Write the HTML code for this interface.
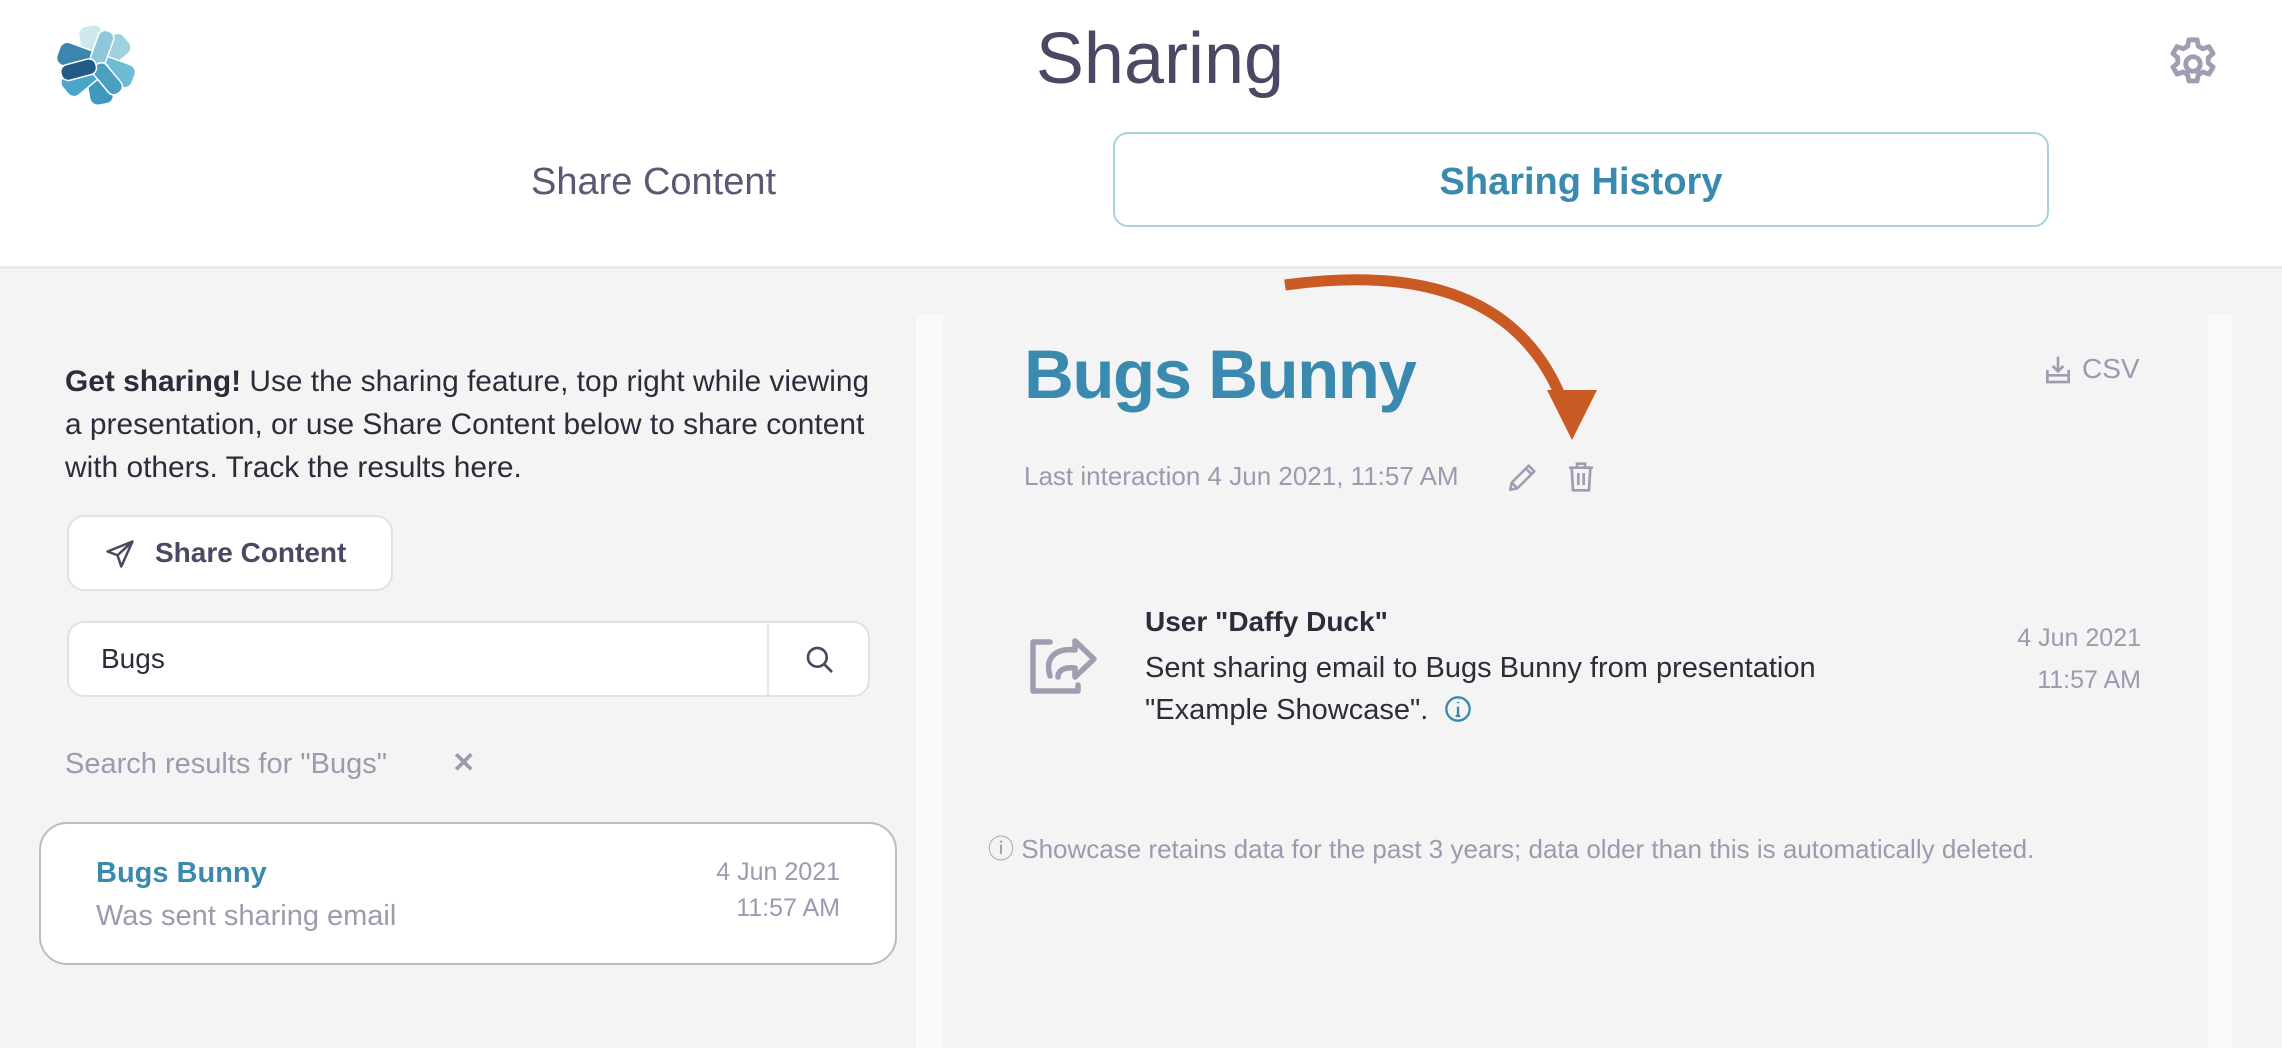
<!DOCTYPE html>
<html><head><meta charset="utf-8"><style>
*{margin:0;padding:0;box-sizing:border-box}
body{width:2282px;height:1048px;overflow:hidden;background:#f4f4f4;font-family:"Liberation Sans",sans-serif;position:relative}
.abs{position:absolute;white-space:nowrap}
#hdr{position:absolute;left:0;top:0;width:2282px;height:269px;background:#fff;border-bottom:3px solid #e8e8ef}
.g{color:#9c9aae}
</style></head><body>
<div id="hdr"></div>
<svg class="abs" style="left:53px;top:25px" width="86" height="80" viewBox="-43 -40 86 80">
<g stroke="#fff" stroke-width="1.5" stroke-linejoin="round">
<rect x="-12" y="-40" width="24" height="42" rx="8" fill="#cfe8ee" transform="rotate(-10)"/>
<rect x="-12" y="-40" width="24" height="42" rx="8" fill="#9fd2df" transform="rotate(50)"/>
<rect x="-12" y="-40" width="24" height="42" rx="8" fill="#6dbcd4" transform="rotate(110)"/>
<rect x="-12" y="-40" width="24" height="42" rx="8" fill="#3f98bd" transform="rotate(170)"/>
<rect x="-12" y="-40" width="24" height="42" rx="8" fill="#4aa6c8" transform="rotate(230)"/>
<rect x="-12" y="-40" width="24" height="42" rx="8" fill="#3a86ad" transform="rotate(290)"/>
<rect x="-8" y="-36" width="16" height="36" rx="7" fill="#8cc8d8" transform="rotate(20)"/>
<rect x="-8" y="-36" width="16" height="36" rx="7" fill="#4d9fc0" transform="rotate(140)"/>
<rect x="-8" y="-36" width="16" height="36" rx="7" fill="#245a86" transform="rotate(255)"/>
</g></svg>
<div class="abs" style="left:0;width:2320px;top:18px;text-align:center;font-size:72px;color:#4a4862">Sharing</div>
<svg class="abs" style="left:2164px;top:35px" width="58" height="58" viewBox="0 0 24 24" fill="none" stroke="#9e9db1" stroke-width="2" stroke-linejoin="round"><path d="M10.3 2h3.4l.5 2.6 1.9 1.1 2.5-.9 1.7 2.9-2 1.7v2.2l2 1.7-1.7 2.9-2.5-.9-1.9 1.1-.5 2.6h-3.4l-.5-2.6-1.9-1.1-2.5.9-1.7-2.9 2-1.7v-2.2l-2-1.7 1.7-2.9 2.5.9 1.9-1.1z"/><circle cx="12" cy="12" r="3"/></svg>
<div class="abs" style="left:531px;top:161px;font-size:38px;color:#5a5873">Share Content</div>
<div class="abs" style="left:1113px;top:132px;width:936px;height:95px;border:2px solid #a9d2dc;border-radius:15px;text-align:center;line-height:97px;font-size:38px;font-weight:bold;color:#3a8aaf">Sharing History</div>
<div class="abs" style="left:65px;top:360px;font-size:29.9px;line-height:43px;color:#2c2c3a;white-space:normal;width:818px"><b>Get sharing!</b> Use the sharing feature, top right while viewing a presentation, or use Share Content below to share content with others. Track the results here.</div>
<div class="abs" style="left:67px;top:515px;width:326px;height:76px;background:#fff;border:2px solid #e0e0ea;border-radius:17px;font-size:28px;font-weight:bold;color:#4a4862;line-height:72px;padding-left:86px">
<svg style="position:absolute;left:36px;top:22px" width="30" height="30" viewBox="0 0 24 24" fill="none" stroke="#4a4862" stroke-width="2" stroke-linejoin="round"><path d="M22 2L2 10l8 3 3 9z M22 2L10 13"/></svg>Share Content</div>
<div class="abs" style="left:67px;top:621px;width:803px;height:76px;background:#fff;border:2px solid #e0e0ea;border-radius:17px;font-size:28px;color:#2c2c3a;line-height:72px;padding-left:32px">Bugs
<div style="position:absolute;left:698px;top:0;width:2px;height:72px;background:#e4e4ec"></div>
<svg style="position:absolute;left:735px;top:21px" width="32" height="32" viewBox="0 0 24 24" fill="none" stroke="#4a4862" stroke-width="2"><circle cx="10" cy="10" r="7"/><path d="M15 15l6 6"/></svg></div>
<div class="abs g" style="left:65px;top:748px;font-size:29px">Search results for "Bugs"</div>
<div class="abs g" style="left:452px;top:746px;font-size:28px;font-weight:bold">✕</div>
<div class="abs" style="left:39px;top:822px;width:858px;height:143px;background:#fff;border:2px solid #bdbcc4;border-radius:28px"></div>
<div class="abs" style="left:96px;top:857px;font-size:29px;font-weight:bold;color:#3a8aaf">Bugs Bunny</div>
<div class="abs g" style="left:96px;top:900px;font-size:29px">Was sent sharing email</div>
<div class="abs g" style="right:1442px;top:854px;font-size:25px;text-align:right;line-height:36px">4 Jun 2021<br>11:57 AM</div>
<div class="abs" style="left:914px;top:314px;width:29px;height:734px;background:#f9f9f9;border-left:1px solid #eee"></div>
<div class="abs" style="left:2208px;top:314px;width:26px;height:734px;background:#f9f9f9;border-right:1px solid #eee"></div>
<div class="abs" style="left:1024px;top:335px;font-size:69px;letter-spacing:-1.5px;font-weight:bold;color:#3a8aaf">Bugs Bunny</div>
<svg class="abs" style="left:2042px;top:353px" width="32" height="34" viewBox="0 0 24 24" fill="none" stroke="#9e9db1" stroke-width="2"><path d="M12 2v11M8 9l4 4 4-4M4 12v9h16v-9M4 16h16"/></svg>
<div class="abs g" style="left:2082px;top:353px;font-size:28px">CSV</div>
<div class="abs g" style="left:1024px;top:461px;font-size:26px">Last interaction 4 Jun 2021, 11:57 AM</div>
<svg class="abs" style="left:1506px;top:460px" width="34" height="34" viewBox="0 0 24 24" fill="none" stroke="#9e9db1" stroke-width="1.8" stroke-linejoin="round"><path d="M3 21l1-5L16 4l4 4L8 20zM14 6l4 4M4 16l4 4"/></svg>
<svg class="abs" style="left:1565px;top:460px" width="32" height="34" viewBox="0 0 24 24" fill="none" stroke="#9e9db1" stroke-width="2"><path d="M3 5h18M9 5V2h6v3M5 5l1 17h12l1-17M10 9v9M14 9v9"/></svg>
<svg class="abs" style="left:0;top:0" width="2282" height="1048"><path d="M1285 285 Q1500 255 1560 395" fill="none" stroke="#c95a24" stroke-width="11"/><path d="M1547 390 L1597 390 L1572 440 Z" fill="#c95a24"/></svg>
<svg class="abs" style="left:1030px;top:632px" width="68" height="62" viewBox="0 0 68 62" fill="none" stroke="#9e9db1" stroke-width="5.5" stroke-linejoin="round" stroke-linecap="round"><path d="M20 10H3v49h45v-6M20 44c-6-20 8-28 25-26V9l19 18-19 18v-9c-10-1-17 2-17 9"/></svg>
<div class="abs" style="left:1145px;top:606px;font-size:28px;font-weight:bold;color:#2c2c3a">User "Daffy Duck"</div>
<div class="abs" style="left:1145px;top:647px;font-size:29px;line-height:42px;color:#2c2c3a">Sent sharing email to Bugs Bunny from presentation<br>"Example Showcase". <svg style="vertical-align:-4px;margin-left:8px" width="28" height="28" viewBox="0 0 24 24" fill="none" stroke="#3a8aaf" stroke-width="2"><circle cx="12" cy="12" r="10"/><path d="M12 10v8M10 18h4M12 6v1"/></svg></div>
<div class="abs g" style="right:141px;top:617px;font-size:25px;text-align:right;line-height:42px">4 Jun 2021<br>11:57 AM</div>
<div class="abs g" style="left:988px;top:829px;font-size:26px">ⓘ Showcase retains data for the past 3 years; data older than this is automatically deleted.</div>
</body></html>
